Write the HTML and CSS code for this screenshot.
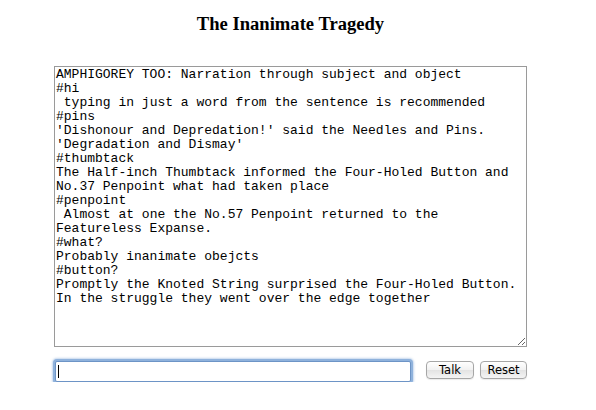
FILE: index.html
```html
<!DOCTYPE html>
<html>
<head>
<meta charset="utf-8">
<title>The Inanimate Tragedy</title>
<link rel="stylesheet" href="styles.css">
</head>
<body>
<div class="page">
  <h1 class="title">The Inanimate Tragedy</h1>
  <div class="panel">
    <textarea class="log" readonly>AMPHIGOREY TOO: Narration through subject and object
#hi
 typing in just a word from the sentence is recommended
#pins
'Dishonour and Depredation!' said the Needles and Pins.
'Degradation and Dismay'
#thumbtack
The Half-inch Thumbtack informed the Four-Holed Button and
No.37 Penpoint what had taken place
#penpoint
 Almost at one the No.57 Penpoint returned to the
Featureless Expanse.
#what?
Probably inanimate obejcts
#button?
Promptly the Knoted String surprised the Four-Holed Button.
In the struggle they went over the edge together</textarea>
    <div class="controls">
      <div class="entry"><span class="caret"></span></div>
      <button class="btn btn-talk" type="button">Talk</button>
      <button class="btn btn-reset" type="button">Reset</button>
    </div>
  </div>
</div>
</body>
</html>
```
FILE: styles.css
```css
html, body {
  margin: 0;
  padding: 0;
  background: #ffffff;
}

.page {
  width: 581px;
  display: flex;
  flex-direction: column;
  align-items: center;
  padding-top: 13px;
}

.title {
  margin: 0;
  font-family: "Liberation Serif", "Times New Roman", serif;
  font-weight: bold;
  font-size: 18.6px;
  line-height: 22px;
  color: #000;
}

.panel {
  width: 473px;
  margin-top: 31px;
  display: flex;
  flex-direction: column;
}

.log {
  box-sizing: border-box;
  width: 473px;
  height: 281px;
  margin: 0;
  padding: 1px 1px;
  border: 1px solid #9a9a9a;
  font-family: "Liberation Mono", "Courier New", monospace;
  font-size: 13px;
  line-height: 14px;
  color: #000;
  background: #fff;
  resize: both;
  overflow: hidden;
  white-space: pre-wrap;
  outline: none;
}

.controls {
  display: flex;
  align-items: flex-start;
  margin-top: 14px;
}

.entry {
  box-sizing: border-box;
  width: 356px;
  height: 21px;
  margin: 0 0 0 1px;
  padding: 3px 2px;
  border: 1px solid #6d94c6;
  border-radius: 2px;
  box-shadow: 0 0 0 2px #8fb2dc, 0 0 2px 3px rgba(140, 175, 220, 0.5);
  background: #fff;
  display: flex;
}

.caret {
  width: 1px;
  height: 13px;
  background: #000;
}

.btn {
  box-sizing: border-box;
  height: 18px;
  margin-top: 0;
  padding: 0;
  border: 1px solid #a6a6a6;
  border-radius: 4px;
  background: linear-gradient(#ffffff, #f1f1f1 50%, #e3e3e3 51%, #f4f4f4);
  font-family: "DejaVu Sans", "Liberation Sans", sans-serif;
  font-size: 11.5px;
  line-height: 16px;
  color: #000;
  box-shadow: 0 1px 1px rgba(0, 0, 0, 0.08);
}

.btn-talk {
  width: 48px;
  margin-left: 15px;
}

.btn-reset {
  width: 47px;
  margin-left: 6px;
}
```
